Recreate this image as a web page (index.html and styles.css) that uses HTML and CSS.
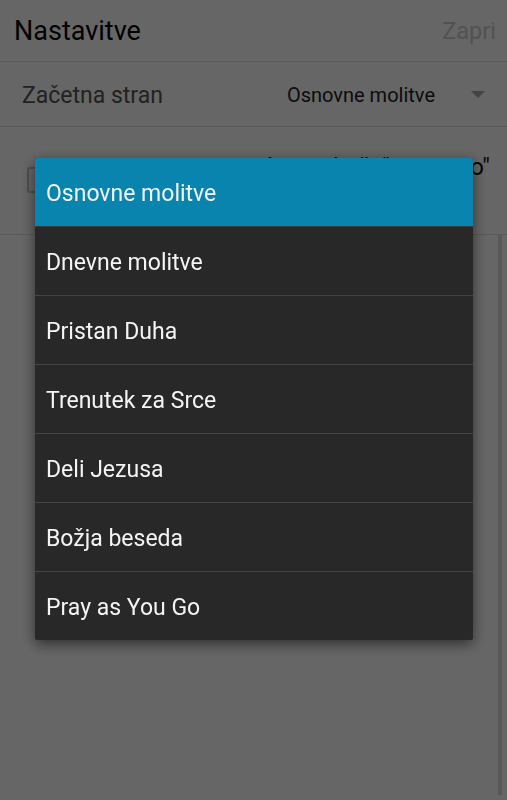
FILE: index.html
```html
<!DOCTYPE html>
<html lang="sl">
<head>
    <meta charset="UTF-8">
    <meta name="viewport" content="width=device-width, initial-scale=1.0">
    <title>Nastavitve</title>
    <link rel="stylesheet" href="styles.css">
</head>
<body>
    <div class="page">
        <header class="topbar">
            <h1>Nastavitve</h1>
            <span class="close">Zapri</span>
        </header>
        <div class="row start-row">
            <span class="row-label">Začetna stran</span>
            <span class="select">
                <span class="select-value">Osnovne molitve</span>
                <span class="caret"></span>
            </span>
        </div>
        <div class="row check-row">
            <span class="checkbox"></span>
            <span class="check-label">Vedno prikaži "Osnovno"</span>
        </div>
        <div class="content">
            <div class="scrollbar"></div>
        </div>
    </div>

    <div class="overlay"></div>

    <div class="dialog">
        <ul class="options">
            <li class="option selected">Osnovne molitve</li>
            <li class="option">Dnevne molitve</li>
            <li class="option">Pristan Duha</li>
            <li class="option">Trenutek za Srce</li>
            <li class="option">Deli Jezusa</li>
            <li class="option">Božja beseda</li>
            <li class="option">Pray as You Go</li>
        </ul>
    </div>
</body>
</html>
```

FILE: styles.css
```css
body {
    margin: 0;
    font-family: Roboto, 'Noto Sans', sans-serif;
    background: #fff;
    color: #000;
    height: 800px;
    overflow: hidden;
}
.page {
    display: flex;
    flex-direction: column;
    height: 800px;
}
.topbar {
    display: flex;
    align-items: center;
    justify-content: space-between;
    height: 61px;
    padding: 0 11px 0 14px;
    border-bottom: 1px solid #e0e0e0;
}
h1 {
    margin: 0;
    font-size: 27px;
    font-weight: 400;
    color: #000;
}
.close {
    font-size: 23.5px;
    color: #ccc;
}
.row {
    display: flex;
    border-bottom: 1px solid #e0e0e0;
}
.start-row {
    height: 65px;
    align-items: center;
    justify-content: space-between;
    padding: 2px 22px 0 22px;
    box-sizing: border-box;
}
.row-label {
    font-size: 23px;
    color: #555;
}
.select {
    display: flex;
    align-items: center;
    gap: 36px;
}
.select-value {
    font-size: 20px;
    color: #222;
}
.caret {
    width: 0;
    height: 0;
    border-left: 7px solid transparent;
    border-right: 7px solid transparent;
    border-top: 7px solid #aaa;
    margin-top: -2px;
}
.check-row {
    height: 108px;
    box-sizing: border-box;
    padding: 25px 17px 0 27px;
    align-items: flex-start;
}
.checkbox {
    width: 22px;
    height: 22px;
    margin-top: 15px;
    border: 2px solid #c4c4c4;
    border-radius: 3px;
}
.check-label {
    flex: 1;
    text-align: right;
    font-size: 24px;
    line-height: 30px;
    color: #111;
}
.content {
    flex: 1;
    display: flex;
    justify-content: flex-end;
    padding: 0 5px 5px 0;
}
.scrollbar {
    width: 4px;
    background: #ddd;
}
.overlay {
    position: fixed;
    inset: 0;
    background: rgba(0, 0, 0, 0.6);
}
.dialog {
    position: fixed;
    left: 35px;
    top: 158px;
    width: 438px;
    background: #282828;
    border-radius: 2px;
    box-shadow: 0 4px 14px rgba(0, 0, 0, 0.55);
    overflow: hidden;
}
.options {
    list-style: none;
    margin: 0;
    padding: 0;
}
.option {
    display: flex;
    align-items: center;
    height: 65px;
    padding: 3px 0 0 11px;
    font-size: 23px;
    color: #f4f4f4;
    border-top: 1px solid #444;
}
.option:first-child {
    border-top: none;
}
.option.selected {
    background: #0984ae;
}
.option.selected + .option {
    border-top-color: #3a3a3a;
}
```
